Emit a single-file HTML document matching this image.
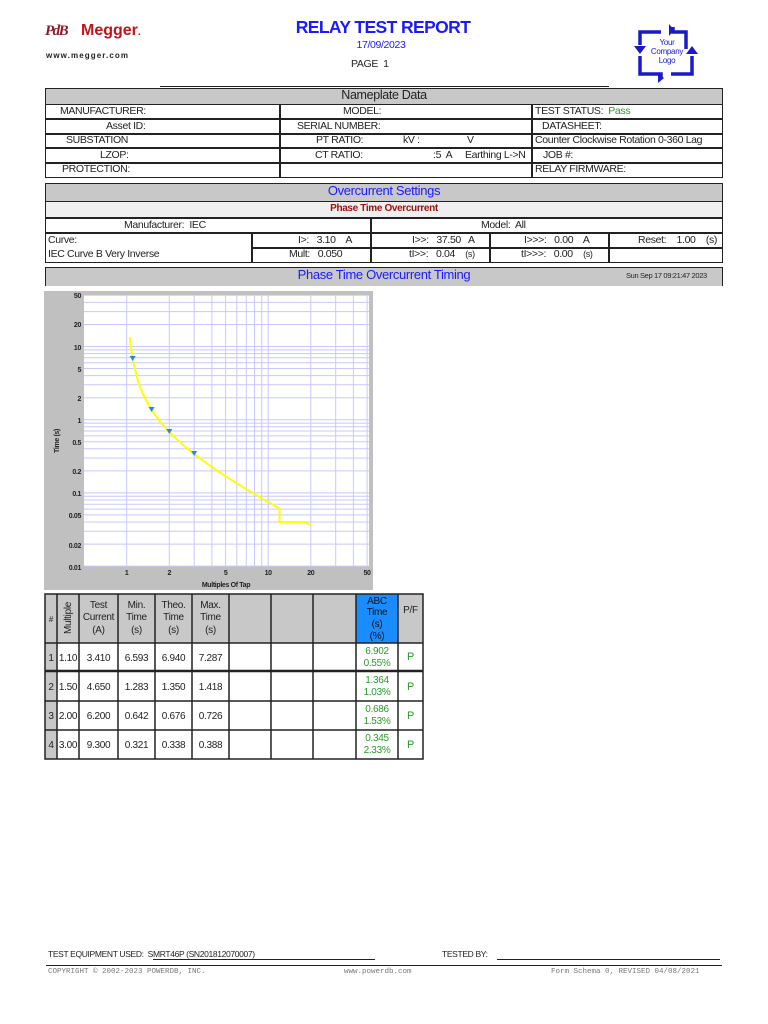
<!DOCTYPE html>
<html><head><meta charset="utf-8"><style>
*{margin:0;padding:0;box-sizing:border-box}
body{width:768px;height:1024px;background:#fff;position:relative;font-family:"Liberation Sans Narrow","Liberation Sans",sans-serif;font-size:10.5px;letter-spacing:-0.35px;color:#222;overflow:hidden}
.a{position:absolute;white-space:nowrap}
.box{position:absolute;border:1.5px solid #222}
.hl{position:absolute;height:1.5px;background:#222}
.vl{position:absolute;width:1.5px;background:#222}
.gray{background:#c8c8c8}
.c{text-align:center}
.r{text-align:right}
.blue{color:#1a1aff}
</style></head><body>

<!-- Megger logo -->
<div class="a" style="left:45px;top:23px;font-family:'Liberation Serif',serif;font-style:italic;font-weight:bold;color:#8b1a2a;font-size:15px;letter-spacing:-1.5px">PdB</div>
<div class="a" style="left:81px;top:22px;font-family:'Liberation Sans',sans-serif;font-weight:bold;color:#c4121a;font-size:16px;letter-spacing:0">Megger<span style="font-size:10px">.</span></div>
<div class="a" style="left:46px;top:51px;font-family:'Liberation Sans',sans-serif;font-weight:bold;font-size:8px;letter-spacing:1.1px;color:#222">www.megger.com</div>

<!-- Title -->
<div class="a c" style="left:260px;width:246px;top:17px;font-family:'Liberation Sans',sans-serif;font-weight:bold;font-size:17.5px;letter-spacing:-0.6px;color:#1a1aff">RELAY TEST REPORT</div>
<div class="a c" style="left:300px;width:162px;top:39px;font-size:10.5px;color:#1a1aff">17/09/2023</div>
<div class="a" style="left:351px;top:58px;font-size:10.5px">PAGE&nbsp; 1</div>
<div class="hl" style="left:160px;width:449px;top:86px;height:1px"></div>

<!-- Company logo -->
<svg class="a" style="left:630px;top:23px" width="74" height="60" viewBox="0 0 74 60">
<g fill="none" stroke="#1a1acc" stroke-width="3.5">
<path d="M31 9 H10 V22"/><path d="M43 4 V9 H56 V26"/><path d="M62 33 V51 H41"/><path d="M31 56 V51 H10 V33"/>
</g>
<g fill="#1a1acc"><path d="M4 23 L16 23 L10 31Z"/><path d="M43 -1 L48 5 L43 11Z" transform="translate(-4 2)"/><path d="M56 27 L68 27 L62 19Z" transform="translate(0 4)"/><path d="M36 51 L30 46 L30 56Z" transform="translate(-2 4)"/></g>
<text x="37" y="22" fill="#1a1acc" font-family="Liberation Sans,sans-serif" font-size="8" letter-spacing="-0.3" text-anchor="middle">Your</text>
<text x="37" y="31" fill="#1a1acc" font-family="Liberation Sans,sans-serif" font-size="8" letter-spacing="-0.3" text-anchor="middle">Company</text>
<text x="37" y="40" fill="#1a1acc" font-family="Liberation Sans,sans-serif" font-size="8" letter-spacing="-0.3" text-anchor="middle">Logo</text>
</svg>

<!-- Nameplate -->
<div class="box gray" style="left:45px;top:88px;width:678px;height:17px"></div>
<div class="a c" style="left:45px;width:678px;top:88px;font-size:12.5px">Nameplate Data</div>
<div class="box" style="left:45px;top:104px;width:678px;height:74px"></div>
<div class="hl" style="left:45px;width:678px;top:118px"></div>
<div class="hl" style="left:45px;width:678px;top:133px"></div>
<div class="hl" style="left:45px;width:678px;top:147px"></div>
<div class="hl" style="left:45px;width:678px;top:162px"></div>
<div class="vl" style="left:279px;top:104px;height:74px"></div>
<div class="vl" style="left:531px;top:104px;height:74px"></div>
<div class="a" style="left:60px;top:105px">MANUFACTURER:</div>
<div class="a" style="left:106px;top:120px">Asset ID:</div>
<div class="a" style="left:66px;top:134px">SUBSTATION</div>
<div class="a" style="left:100px;top:149px">LZOP:</div>
<div class="a" style="left:62px;top:163px">PROTECTION:</div>
<div class="a" style="left:343px;top:105px">MODEL:</div>
<div class="a" style="left:297px;top:120px">SERIAL NUMBER:</div>
<div class="a" style="left:316px;top:134px">PT RATIO:</div>
<div class="a" style="left:403px;top:134px">kV :</div>
<div class="a" style="left:467px;top:134px">V</div>
<div class="a" style="left:315px;top:149px">CT RATIO:</div>
<div class="a" style="left:433px;top:149px">:5&nbsp; A</div>
<div class="a" style="left:465px;top:149px">Earthing L-&gt;N</div>
<div class="a" style="left:535px;top:105px">TEST STATUS:&nbsp; <span style="color:#2a9a2a">Pass</span></div>
<div class="a" style="left:542px;top:120px">DATASHEET:</div>
<div class="a" style="left:535px;top:134px">Counter Clockwise Rotation 0-360 Lag</div>
<div class="a" style="left:543px;top:149px">JOB #:</div>
<div class="a" style="left:535px;top:163px">RELAY FIRMWARE:</div>

<!-- Overcurrent settings -->
<div class="box gray" style="left:45px;top:183px;width:678px;height:19px"></div>
<div class="a c blue" style="left:45px;width:678px;top:183px;font-size:13px">Overcurrent Settings</div>
<div class="box" style="left:45px;top:201px;width:678px;height:17px;background:#efefef"></div>
<div class="a c" style="left:45px;width:678px;top:203px;font-weight:bold;color:#a01010;font-size:10px">Phase Time Overcurrent</div>
<div class="box" style="left:45px;top:218px;width:678px;height:45px"></div>
<div class="hl" style="left:45px;width:678px;top:232px"></div>
<div class="hl" style="left:251px;width:472px;top:247px"></div>
<div class="vl" style="left:370px;top:218px;height:45px"></div>
<div class="vl" style="left:251px;top:232px;height:31px"></div>
<div class="vl" style="left:489px;top:232px;height:31px"></div>
<div class="vl" style="left:608px;top:232px;height:31px"></div>
<div class="a" style="left:124px;top:219px">Manufacturer:&nbsp; IEC</div>
<div class="a" style="left:481px;top:219px">Model:&nbsp; All</div>
<div class="a" style="left:48px;top:234px">Curve:</div>
<div class="a" style="left:48px;top:248px">IEC Curve B Very Inverse</div>
<div class="a" style="left:298px;top:234px">I&gt;:&nbsp;&nbsp; 3.10&nbsp;&nbsp;&nbsp; A</div>
<div class="a" style="left:289px;top:248px">Mult:&nbsp;&nbsp; 0.050</div>
<div class="a" style="left:412px;top:234px">I&gt;&gt;:&nbsp;&nbsp; 37.50&nbsp;&nbsp; A</div>
<div class="a" style="left:409px;top:248px">tI&gt;&gt;:&nbsp;&nbsp; 0.04&nbsp;&nbsp;&nbsp; <span style="font-size:9px">(s)</span></div>
<div class="a" style="left:524px;top:234px">I&gt;&gt;&gt;:&nbsp;&nbsp; 0.00&nbsp;&nbsp;&nbsp; A</div>
<div class="a" style="left:521px;top:248px">tI&gt;&gt;&gt;:&nbsp;&nbsp; 0.00&nbsp;&nbsp;&nbsp; <span style="font-size:9px">(s)</span></div>
<div class="a" style="left:638px;top:234px">Reset:&nbsp;&nbsp;&nbsp; 1.00&nbsp;&nbsp;&nbsp; (s)</div>

<!-- Timing header -->
<div class="box gray" style="left:45px;top:267px;width:678px;height:19px;border-bottom:none"></div>
<div class="a c blue" style="left:45px;width:678px;top:267px;font-size:13px">Phase Time Overcurrent Timing</div>
<div class="a" style="left:626px;top:271px;font-size:7.5px">Sun Sep 17 09:21:47 2023</div>

<!-- Chart -->
<svg class="a" style="left:0;top:0" width="768" height="600" viewBox="0 0 768 600">
<defs>
<clipPath id="cp"><rect x="84" y="295" width="285" height="272"/></clipPath>
<g id="hd" stroke="#c8c8ff" stroke-width="1"><line x1="84" x2="369" y1="0" y2="0"/><line x1="84" x2="369" y1="-22" y2="-22"/><line x1="84" x2="369" y1="-34.9" y2="-34.9"/><line x1="84" x2="369" y1="-44.1" y2="-44.1"/><line x1="84" x2="369" y1="-51.2" y2="-51.2"/><line x1="84" x2="369" y1="-57" y2="-57"/><line x1="84" x2="369" y1="-61.9" y2="-61.9"/><line x1="84" x2="369" y1="-66.1" y2="-66.1"/><line x1="84" x2="369" y1="-69.8" y2="-69.8"/></g>
<g id="vd" stroke="#c8c8ff" stroke-width="1"><line y1="295" y2="566" x1="0" x2="0"/><line y1="295" y2="566" x1="42.6" x2="42.6"/><line y1="295" y2="566" x1="67.5" x2="67.5"/><line y1="295" y2="566" x1="85.2" x2="85.2"/><line y1="295" y2="566" x1="98.9" x2="98.9"/><line y1="295" y2="566" x1="110.1" x2="110.1"/><line y1="295" y2="566" x1="119.6" x2="119.6"/><line y1="295" y2="566" x1="127.8" x2="127.8"/><line y1="295" y2="566" x1="135" x2="135"/></g>
</defs>
<rect x="44" y="291" width="329" height="299" fill="#c0c0c0"/>
<rect x="84" y="295" width="285" height="271" fill="#fff"/>
<g clip-path="url(#cp)">
<use href="#hd" transform="translate(0 566.1)"/><use href="#hd" transform="translate(0 492.9)"/><use href="#hd" transform="translate(0 419.7)"/><use href="#hd" transform="translate(0 346.5)"/>
<use href="#vd" transform="translate(126.7 0)"/><use href="#vd" transform="translate(268.2 0)"/>
</g>
<polyline fill="none" stroke="#ffff00" stroke-width="2" points="129.7,336.9 132.6,359 137.9,381 142.8,393.9 151.6,410.1 161.1,423 169.3,432.1 183,445 194.2,454.2 211.9,467.1 225.6,476.2 236.8,483.3 254.5,494 268.2,502 279.5,508.4 279.5,522 304.3,522 310.8,525.4"/>
<g fill="#2288ee"><path d="M129.6,356 h6 l-3,5z"/><path d="M148.6,407 h6 l-3,5z"/><path d="M166.3,429 h6 l-3,5z"/><path d="M191.2,451 h6 l-3,5z"/></g>
<g font-family="Liberation Sans,sans-serif" font-weight="bold" font-size="7" fill="#222" text-anchor="end">
<text x="81" y="298">50</text><text x="81" y="327">20</text><text x="81" y="350">10</text><text x="81" y="372">5</text><text x="81" y="401">2</text><text x="81" y="423">1</text><text x="81" y="445">0.5</text><text x="81" y="474">0.2</text><text x="81" y="496">0.1</text><text x="81" y="518">0.05</text><text x="81" y="548">0.02</text><text x="81" y="570">0.01</text>
</g>
<g font-family="Liberation Sans,sans-serif" font-weight="bold" font-size="7" fill="#222" text-anchor="middle">
<text x="126.7" y="575">1</text><text x="169.3" y="575">2</text><text x="225.6" y="575">5</text><text x="268.2" y="575">10</text><text x="310.8" y="575">20</text><text x="367" y="575">50</text>
<text x="226" y="587">Multiples Of Tap</text>
<text transform="translate(59 441) rotate(-90)">Time (s)</text>
</g>
</svg>

<!-- Results table -->
<svg class="a" style="left:0;top:0" width="768" height="770" viewBox="0 0 768 770">
<rect x="45" y="594" width="12" height="165" fill="#c8c8c8"/>
<rect x="57" y="594" width="366" height="49" fill="#c8c8c8"/>
<rect x="356" y="594" width="42" height="49" fill="#1a8cff"/>
<rect x="229" y="643" width="127" height="116" fill="#fff"/>
<g stroke="#222" stroke-width="1.5" fill="none">
<rect x="45" y="594" width="378" height="165"/>
<line x1="45" x2="423" y1="643" y2="643"/><line x1="45" x2="423" y1="671" y2="671" stroke-width="2.5"/><line x1="45" x2="423" y1="701" y2="701"/><line x1="45" x2="423" y1="730" y2="730"/>
<line x1="57" x2="57" y1="594" y2="759"/><line x1="79" x2="79" y1="594" y2="759"/><line x1="118" x2="118" y1="594" y2="759"/><line x1="155" x2="155" y1="594" y2="759"/><line x1="192" x2="192" y1="594" y2="759"/><line x1="229" x2="229" y1="594" y2="759"/><line x1="271" x2="271" y1="594" y2="759"/><line x1="313" x2="313" y1="594" y2="759"/><line x1="356" x2="356" y1="594" y2="759"/><line x1="398" x2="398" y1="594" y2="759"/>
</g>
<g font-family="Liberation Sans,sans-serif" font-size="10" letter-spacing="-0.3" fill="#222" text-anchor="middle">
<text x="51" y="622" font-size="8">#</text>
<text transform="translate(71 618) rotate(-90)">Multiple</text>
<text x="98.5" y="608">Test</text><text x="98.5" y="620">Current</text><text x="98.5" y="633">(A)</text>
<text x="136.5" y="608">Min.</text><text x="136.5" y="620">Time</text><text x="136.5" y="633">(s)</text>
<text x="173.5" y="608">Theo.</text><text x="173.5" y="620">Time</text><text x="173.5" y="633">(s)</text>
<text x="210.5" y="608">Max.</text><text x="210.5" y="620">Time</text><text x="210.5" y="633">(s)</text>
<g fill="#111"><text x="377" y="604">ABC</text><text x="377" y="615">Time</text><text x="377" y="627">(s)</text><text x="377" y="639">(%)</text></g>
<text x="410.5" y="613">P/F</text>
<text x="51" y="661">1</text><text x="68" y="661">1.10</text><text x="98.5" y="661">3.410</text><text x="136.5" y="661">6.593</text><text x="173.5" y="661">6.940</text><text x="210.5" y="661">7.287</text>
<text x="51" y="690">2</text><text x="68" y="690">1.50</text><text x="98.5" y="690">4.650</text><text x="136.5" y="690">1.283</text><text x="173.5" y="690">1.350</text><text x="210.5" y="690">1.418</text>
<text x="51" y="719">3</text><text x="68" y="719">2.00</text><text x="98.5" y="719">6.200</text><text x="136.5" y="719">0.642</text><text x="173.5" y="719">0.676</text><text x="210.5" y="719">0.726</text>
<text x="51" y="748">4</text><text x="68" y="748">3.00</text><text x="98.5" y="748">9.300</text><text x="136.5" y="748">0.321</text><text x="173.5" y="748">0.338</text><text x="210.5" y="748">0.388</text>
<g fill="#2a9a2a">
<text x="377" y="654">6.902</text><text x="377" y="666">0.55%</text>
<text x="377" y="683">1.364</text><text x="377" y="695">1.03%</text>
<text x="377" y="712">0.686</text><text x="377" y="724">1.53%</text>
<text x="377" y="741">0.345</text><text x="377" y="753">2.33%</text>
<text x="410.5" y="660" font-size="11">P</text><text x="410.5" y="690" font-size="11">P</text><text x="410.5" y="719" font-size="11">P</text><text x="410.5" y="748" font-size="11">P</text>
</g>
</g>
</svg>

<!-- Footer -->
<div class="a" style="left:48px;top:949px;font-size:8.5px">TEST EQUIPMENT USED:&nbsp; SMRT46P (SN201812070007)</div>
<div class="hl" style="left:153px;width:222px;top:959px;height:1px"></div>
<div class="a" style="left:442px;top:949px;font-size:8.5px">TESTED BY:</div>
<div class="hl" style="left:497px;width:223px;top:959px;height:1px"></div>
<div class="hl" style="left:46px;width:676px;top:965px;height:1px"></div>
<div class="a" style="left:48px;top:968px;font-family:'Liberation Mono',monospace;font-size:7.5px;letter-spacing:0;color:#777">COPYRIGHT © 2002-2023 POWERDB, INC.</div>
<div class="a" style="left:344px;top:968px;font-family:'Liberation Mono',monospace;font-size:7.5px;letter-spacing:0;color:#777">www.powerdb.com</div>
<div class="a" style="left:551px;top:968px;font-family:'Liberation Mono',monospace;font-size:7.5px;letter-spacing:0;color:#777">Form Schema 0, REVISED 04/08/2021</div>
</body></html>
